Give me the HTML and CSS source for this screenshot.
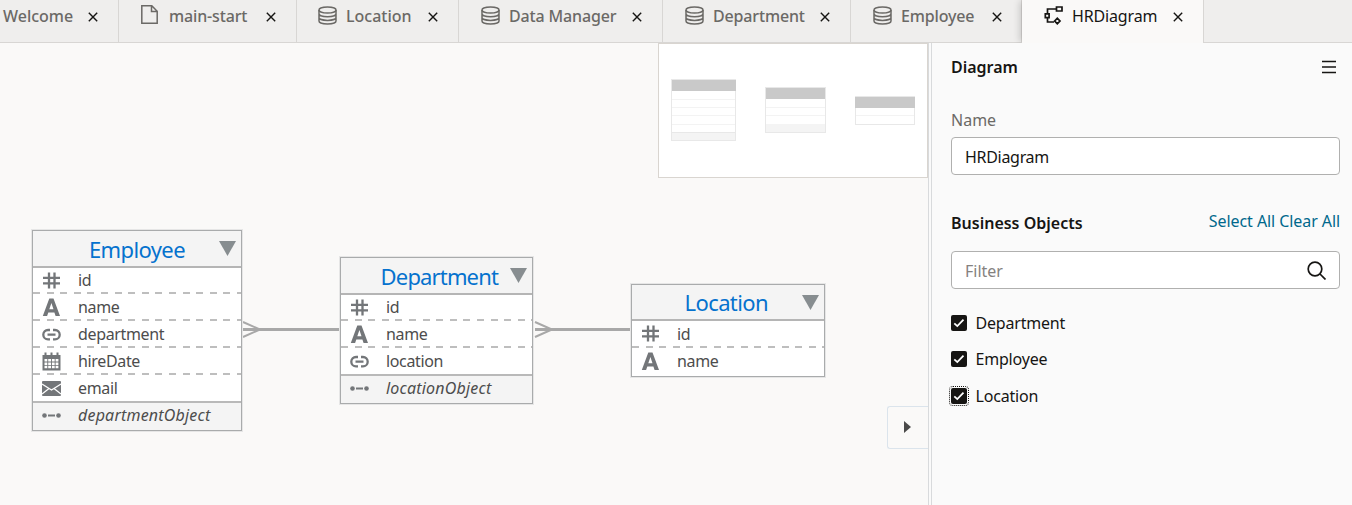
FILE: index.html
```html
<!DOCTYPE html>
<html lang="en">
<head>
<meta charset="utf-8">
<title>HRDiagram</title>
<link rel="stylesheet" href="styles.css">
</head>
<body>
<svg class="defs" aria-hidden="true">
  <symbol id="db" viewBox="0 0 19 19"><g fill="none" stroke="currentColor" stroke-width="1.5"><ellipse cx="9.5" cy="4" rx="8.5" ry="3"/><path d="M1 4v11c0 1.7 3.8 3 8.500 3s8.500-1.300 8.500-3V4M1 7.700c0 1.700 3.800 3 8.500 3s8.500-1.300 8.500-3M1 11.400c0 1.700 3.800 3 8.500 3s8.500-1.300 8.500-3"/></g></symbol>
  <symbol id="file" viewBox="0 0 17 19"><path d="M.8.800h10l5.400 5.400v12H.8zM10.500.800v5.700h5.700" fill="none" stroke="currentColor" stroke-width="1.500"/></symbol>
  <symbol id="flow" viewBox="0 0 19 19"><g fill="none" stroke="currentColor" stroke-width="1.700"><path d="M12 3H3.500v4.500M3.500 12v4H10"/><path d="M12.500 1h5.500v4h-5.500zM1.300 7.800h3.800v3.900H1.300zM10.600 15l2.700-2.700L16 15l-2.700 2.700z"/></g></symbol>
  <symbol id="close" viewBox="0 0 10 10"><path d="M.8.800l8.400 8.400M9.200.800L.8 9.200" fill="none" stroke="currentColor" stroke-width="1.400"/></symbol>
  <symbol id="hash" viewBox="0 0 19 19"><path d="M7 1.500v16M12.500 1.500v16M1 6.800h17M1 12.300h17" fill="none" stroke="currentColor" stroke-width="2.300"/></symbol>
  <symbol id="text" viewBox="0 0 19 19"><path d="M.800 18L7.300.500h4.200L18 18h-4.400l-1.200-3.500H6.300L5.100 18zM7.300 11.300h4.200L9.400 5z" fill="currentColor" fill-rule="evenodd"/></symbol>
  <symbol id="link" viewBox="0 0 19 19"><path d="M8 5H6a4.700 4.700 0 0 0 0 9.400h2M11 5h2a4.700 4.700 0 0 1 0 9.400h-2M5.500 9.700h8" fill="none" stroke="currentColor" stroke-width="2.300"/></symbol>
  <symbol id="calendar" viewBox="0 0 19 19"><path d="M.500 3h18v15.500H.500z" fill="currentColor"/><path d="M3.500.500v4M9.500.500v4M15.500.500v4" stroke="currentColor" stroke-width="2"/><path d="M2.500 7h2.800v2.500H2.500zM6.200 7H9v2.500H6.200zM9.900 7h2.800v2.500H9.900zM13.600 7h2.800v2.500h-2.800zM2.500 10.400h2.800v2.500H2.500zM6.200 10.400H9v2.500H6.200zM9.900 10.400h2.800v2.500H9.900zM13.600 10.400h2.800v2.500h-2.800zM2.500 13.800h2.800v2.500H2.500zM6.200 13.800H9v2.500H6.200zM9.900 13.800h2.800v2.500H9.900zM13.600 13.800h2.800v2.500h-2.800z" fill="#fff"/></symbol>
  <symbol id="mail" viewBox="0 0 19 19"><rect y="2" width="19" height="15" rx="1" fill="currentColor"/><path d="M0 5l9.500 6L19 5M0 15l7-5.500M19 15l-7-5.500" fill="none" stroke="#fff" stroke-width="1.300"/></symbol>
  <symbol id="relation" viewBox="0 0 19 19"><circle cx="2.500" cy="9.500" r="2.300" fill="currentColor"/><circle cx="16.500" cy="9.500" r="2.300" fill="currentColor"/><path d="M6 9.500h7" stroke="currentColor" stroke-width="2"/></symbol>
</svg>

<nav class="tabs">
  <div class="tab tab-welcome"><span>Welcome</span><svg class="close"><use href="#close"/></svg></div>
  <div class="tab tab-main"><svg class="tab-icon file"><use href="#file"/></svg><span>main-start</span><svg class="close"><use href="#close"/></svg></div>
  <div class="tab tab-location"><svg class="tab-icon"><use href="#db"/></svg><span>Location</span><svg class="close"><use href="#close"/></svg></div>
  <div class="tab tab-data"><svg class="tab-icon"><use href="#db"/></svg><span>Data Manager</span><svg class="close"><use href="#close"/></svg></div>
  <div class="tab tab-department"><svg class="tab-icon"><use href="#db"/></svg><span>Department</span><svg class="close"><use href="#close"/></svg></div>
  <div class="tab tab-employee"><svg class="tab-icon"><use href="#db"/></svg><span>Employee</span><svg class="close"><use href="#close"/></svg></div>
  <div class="tab tab-active"><svg class="tab-icon"><use href="#flow"/></svg><span>HRDiagram</span><svg class="close"><use href="#close"/></svg></div>
</nav>

<div class="workspace">
  <main class="canvas">
    <svg class="connectors" width="928" height="462">
      <g fill="none" stroke="#a8a8a8" stroke-width="2"><path d="M243 279l17 7.500-17 7.500M535 279l17 7.500-17 7.500"/><path d="M243 286.500h97M535 286.500h96" stroke-width="3"/></g>
    </svg>
    <section class="entity employee">
      <header class="entity-head"><h2>Employee</h2><svg class="caret" viewBox="0 0 17 15"><path d="M0 0h17L8.500 15z"/></svg></header>
      <div class="field"><svg><use href="#hash"/></svg><span>id</span></div>
      <div class="field"><svg><use href="#text"/></svg><span>name</span></div>
      <div class="field"><svg><use href="#link"/></svg><span>department</span></div>
      <div class="field"><svg><use href="#calendar"/></svg><span>hireDate</span></div>
      <div class="field"><svg><use href="#mail"/></svg><span>email</span></div>
      <div class="field accessor"><svg><use href="#relation"/></svg><span>departmentObject</span></div>
    </section>
    <section class="entity department">
      <header class="entity-head"><h2>Department</h2><svg class="caret" viewBox="0 0 17 15"><path d="M0 0h17L8.500 15z"/></svg></header>
      <div class="field"><svg><use href="#hash"/></svg><span>id</span></div>
      <div class="field"><svg><use href="#text"/></svg><span>name</span></div>
      <div class="field"><svg><use href="#link"/></svg><span>location</span></div>
      <div class="field accessor"><svg><use href="#relation"/></svg><span>locationObject</span></div>
    </section>
    <section class="entity location">
      <header class="entity-head"><h2>Location</h2><svg class="caret" viewBox="0 0 17 15"><path d="M0 0h17L8.500 15z"/></svg></header>
      <div class="field"><svg><use href="#hash"/></svg><span>id</span></div>
      <div class="field"><svg><use href="#text"/></svg><span>name</span></div>
    </section>
    <aside class="minimap">
      <svg width="269" height="134" shape-rendering="crispEdges">
        <g fill="#fff" stroke="#e8e8e8"><path d="M12.500 35.500h64v61h-64zM106.500 43.500h60v45h-60zM196.500 52.500h59v28h-59z"/></g>
        <path d="M13 88h63v8H13zM107 80h59v8h-59z" fill="#f4f4f4"/>
        <path d="M13 36h64v11H13zM107 44h59v11h-59zM196 53h60v11h-60z" fill="#c9c9c9"/>
        <path d="M13 55.500h63M13 63.500h63M13 71.500h63M13 80.500h63M107 63.500h59M107 71.500h59M197 71.500h58" stroke="#f3f3f3"/>
        <path d="M13 88.500h63" stroke="#e8e8e8"/>
      </svg>
    </aside>
    <button class="expander" aria-label="Collapse"><svg width="7" height="12"><path d="M0 0l7 6-7 6z" fill="#4a4a4a"/></svg></button>
  </main>
  <aside class="panel">
    <header class="panel-head"><h1>Diagram</h1><svg class="menu" width="14" height="14"><path d="M0 1.500h14M0 7h14M0 12.500h14" stroke="#161513" stroke-width="1.700"/></svg></header>
    <label class="name-label">Name</label>
    <div class="input name-input"><span>HRDiagram</span></div>
    <div class="objects-head"><h3>Business Objects</h3><div class="links"><a>Select All</a> <a>Clear All</a></div></div>
    <div class="input filter"><span>Filter</span><svg width="19" height="19"><circle cx="8" cy="8" r="6.800"/><path d="M13 13l5.500 5.500"/></svg></div>
    <div class="checks">
      <div class="check"><i class="box"><svg viewBox="0 0 16 16"><path d="M3.300 8.300l3 2.800 6.200-6.500"/></svg></i><span>Department</span></div>
      <div class="check"><i class="box"><svg viewBox="0 0 16 16"><path d="M3.300 8.300l3 2.800 6.200-6.500"/></svg></i><span>Employee</span></div>
      <div class="check"><i class="box focused"><svg viewBox="0 0 16 16"><path d="M3.300 8.300l3 2.800 6.200-6.500"/></svg></i><span>Location</span></div>
    </div>
  </aside>
</div>
</body>
</html>
```

FILE: styles.css
```css
* { box-sizing: border-box; }
body { margin: 0; height: 505px; overflow: hidden; background: #faf9f8; color: #161513; font: 16px/22px "Noto Sans", sans-serif; }
h1, h2, h3 { margin: 0; font-weight: 600; }
svg { display: block; flex: none; }
.defs { position: absolute; width: 0; height: 0; }

.tabs { display: flex; height: 43px; background: #efeeed; border-bottom: 1px solid #d8d6d4; }
.tab { display: flex; flex: none; align-items: flex-start; height: 42px; padding: 5px 20px 0 22px; border-right: 1px solid #d8d6d4; color: #6b6966; font-weight: 500; letter-spacing: -.15px; white-space: nowrap; }
.tab-icon { width: 19px; height: 19px; margin: 1px 9px 0 0; }
.tab-icon.file { width: 17px; margin: 0 11px 0 0; }
.close { width: 10px; height: 10px; margin: 7px 0 0 auto; color: #161513; }
.tab-welcome { width: 119px; padding-left: 3px; letter-spacing: 0; }
.tab-main { width: 178px; }
.tab-location { width: 162px; padding-left: 21px; letter-spacing: 0; }
.tab-data { width: 204px; }
.tab-department { width: 188px; }
.tab-employee { width: 171px; padding-right: 19px; }
.tab-active { width: 182px; height: 43px; background: #faf9f8; color: #161513; font-weight: 400; box-shadow: -3px 0 7px -1px rgba(0, 0, 0, .18); clip-path: inset(0 0 0 -10px); }

.workspace { display: flex; height: 462px; }
.canvas { position: relative; width: 928px; }
.connectors { position: absolute; left: 0; top: 0; }
.entity { position: absolute; border: 1px solid #a9abac; background: #fff; color: #4d4d4d; outline: 1px solid #e6e6e6; }
.employee { left: 32px; top: 187px; width: 210px; }
.department { left: 340px; top: 214px; width: 193px; }
.location { left: 631px; top: 241px; width: 194px; }
.entity-head { display: flex; align-items: center; justify-content: flex-end; height: 37px; padding-right: 5px; background: #f4f4f4; border-bottom: 2px solid #b5b5b5; }
.location .entity-head { height: 36px; }
.entity-head h2 { color: #0572ce; font-size: 22px; font-weight: 400; letter-spacing: -.6px; margin-right: 34px; }
.department .entity-head h2 { margin-right: 12px; letter-spacing: -.85px; }
.caret { width: 17px; height: 15px; fill: #878d90; }
.field { display: flex; align-items: center; height: 27px; padding: 0 0 3px 9px; gap: 17px; letter-spacing: -.35px; background: repeating-linear-gradient(90deg, #bebebe 0 7px, transparent 7px 13.600px) bottom / 100% 2px no-repeat; }
.employee .field:not(.accessor), .department .field:not(.accessor) { background-position: 0 24px; }
.location .field { padding-bottom: 2px; }
.location .field:last-child { height: 28px; }
.field svg { width: 19px; height: 19px; color: #737679; }
.field:last-child { background: none; }
.field:has(+ .accessor) { background: none; }
.field.accessor { height: 29px; margin-top: -2px; border-top: 2px solid #b9b9b9; background: #f4f4f4; font-style: italic; letter-spacing: .2px; }

.minimap { position: absolute; left: 658px; top: 0; width: 270px; height: 135px; border: 1px solid #d9d5d0; background: #fff; }
.expander { position: absolute; right: 0; top: 363px; width: 41px; height: 43px; display: flex; align-items: center; padding: 0 0 1px 16px; border: 1px solid #dbe4ec; border-right: 0; border-radius: 3px 0 0 3px; background: #faf9f8; }

.panel { width: 424px; padding: 13px 12px 0 19px; border-left: 4px double #d8dadc; background: #fafafa; }
.panel-head { display: flex; align-items: center; justify-content: space-between; padding-right: 4px; }
.panel h1, .panel h3 { font-size: 16px; }
.name-label { display: block; margin-top: 31px; color: #6b6966; }
.input { display: flex; align-items: center; justify-content: space-between; height: 38px; padding: 0 13px; border: 1px solid #b0b0af; border-radius: 4px; background: #fff; }
.input span { padding-top: 2px; }
.name-input { margin-top: 6px; letter-spacing: -.3px; }
.objects-head { display: flex; justify-content: space-between; margin-top: 35px; }
.objects-head h3 { padding-top: 2px; }
.links { color: #00688c; letter-spacing: -.08px; }
.filter { margin-top: 17px; color: #85827f; }
.filter svg { fill: none; stroke: #161513; stroke-width: 1.7; }
.checks { display: grid; gap: 14.400px; margin-top: 23px; }
.check { display: flex; align-items: center; gap: 8px; letter-spacing: -.2px; }
.check span { padding-left: .5px; }
.box { width: 16px; height: 16px; border-radius: 2px; background: #161513; }
.box svg { fill: none; stroke: #fff; stroke-width: 1.8; }
.box.focused { outline: 1px dotted #161513; outline-offset: 1px; }
```
